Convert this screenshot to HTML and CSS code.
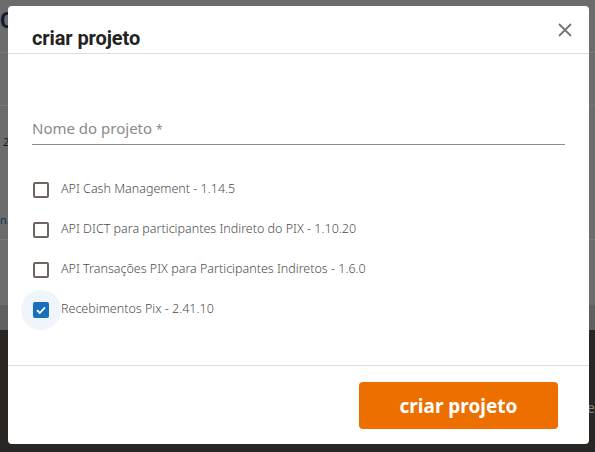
FILE: index.html
```html
<!DOCTYPE html>
<html lang="pt">
<head>
<meta charset="utf-8">
<title>criar projeto</title>
<link rel="stylesheet" href="styles.css">
</head>
<body>
<div class="page">
  <div class="page-top"><span class="page-title">CO</span></div>
  <div class="page-row"></div>
  <div class="page-row tall"><span class="cell-num">2</span><span class="cell-link">n.</span></div>
  <div class="page-row short"></div>
  <div class="page-band"></div>
  <div class="page-dark"><span class="dark-text">le</span></div>
</div>

<div class="modal" role="dialog">
  <div class="modal-header">
    <h2 class="modal-title">criar projeto</h2>
    <button class="close" aria-label="fechar">
      <svg width="14" height="14" viewBox="0 0 14 14"><path d="M1 1L13 13M13 1L1 13" stroke="#757575" stroke-width="1.8" fill="none"/></svg>
    </button>
  </div>
  <div class="modal-body">
    <div class="field"><span class="field-label">Nome do projeto <span class="req">*</span></span></div>
    <ul class="options">
      <li class="option"><span class="check"><span class="box"></span></span><span class="option-text">API Cash Management - 1.14.5</span></li>
      <li class="option"><span class="check"><span class="box"></span></span><span class="option-text">API DICT para participantes Indireto do PIX - 1.10.20</span></li>
      <li class="option"><span class="check"><span class="box"></span></span><span class="option-text">API Transações PIX para Participantes Indiretos - 1.6.0</span></li>
      <li class="option"><span class="check checked"><span class="box"><svg width="12" height="12" viewBox="0 0 12 12"><path d="M2 6.2L4.8 9L10 3.4" stroke="#fff" stroke-width="1.8" fill="none"/></svg></span></span><span class="option-text">Recebimentos Pix - 2.41.10</span></li>
    </ul>
  </div>
  <div class="modal-footer">
    <button class="primary">criar projeto</button>
  </div>
</div>
</body>
</html>
```

FILE: styles.css
```css
* { box-sizing: border-box; }
html, body { margin: 0; padding: 0; }
body {
  width: 595px;
  height: 452px;
  overflow: hidden;
  background: #6c6c6c;
  font-family: "Noto Sans", "Liberation Sans", sans-serif;
}
.page { display: flex; flex-direction: column; height: 452px; }
.page-top { height: 53px; border-bottom: 1px solid #7a7a7a; padding: 8px 0 0 0; }
.page-title { display: block; margin-left: 0; font: 700 22px "Roboto", sans-serif; color: #0f1b33; }
.page-row { height: 53px; border-bottom: 1px solid #7a7a7a; }
.page-row.tall { height: 134px; position: relative; }
.cell-num { position: absolute; left: 3px; top: 28px; font-size: 11px; color: #1b1b1b; }
.cell-link { position: absolute; left: 0; top: 106px; font-size: 11px; color: #0f3050; }
.page-row.short { height: 65px; border-bottom: none; }
.page-band { height: 25px; background: #5f5f5f; }
.page-dark { flex: 1; background: #2a2623; position: relative; }
.dark-text { position: absolute; right: 0; top: 68px; font-size: 14px; color: #7c8590; }

.modal {
  position: absolute;
  left: 8px;
  top: 6px;
  width: 581px;
  height: 438px;
  background: #fff;
  border-radius: 4px;
  display: flex;
  flex-direction: column;
}
.modal-header {
  height: 48px;
  border-bottom: 1px solid #dedede;
  display: flex;
  align-items: flex-start;
  justify-content: space-between;
  padding: 17px 17px 0 24px;
}
.modal-title {
  margin: 3px 0 0 0;
  font: 700 20px/24px "Roboto", sans-serif;
  color: #222;
  letter-spacing: -0.1px;
}
.close {
  border: 0;
  background: none;
  padding: 0;
  width: 14px;
  height: 14px;
  display: flex;
}
.modal-body { flex: 1; padding: 56px 24px 0 24px; }
.field {
  border-bottom: 1px solid #8c8c8c;
  padding: 8px 0 6px 0;
  height: 35px;
}
.field-label {
  display: block;
  font-size: 15px;
  line-height: 20px;
  color: #8a8a8a;
}
.req { font-size: 12px; }
.options { list-style: none; margin: 25px 0 0 0; padding: 0; }
.option { display: flex; align-items: center; height: 40px; }
.check {
  width: 40px;
  height: 40px;
  margin-left: -11px;
  border-radius: 50%;
  display: flex;
  align-items: center;
  justify-content: center;
  flex: none;
}
.check.checked { background: #f0f5fb; }
.box {
  width: 16px;
  height: 16px;
  border: 2px solid #6e6560;
  border-radius: 2px;
  display: flex;
  align-items: center;
  justify-content: center;
}
.checked .box { background: #1a6fbd; border-color: #1a6fbd; }
.option-text {
  font-size: 12.5px;
  color: #4c4c4c;
  font-weight: 300;
  margin-top: -3px;
}
.modal-footer {
  border-top: 1px solid #dedede;
  padding: 16px 31px 15px 24px;
  display: flex;
  justify-content: flex-end;
}
.primary {
  width: 199px;
  height: 47px;
  border: 0;
  border-radius: 4px;
  background: #ec6f00;
  color: #fff;
  font: 700 19px "Noto Sans", sans-serif;
}
```
